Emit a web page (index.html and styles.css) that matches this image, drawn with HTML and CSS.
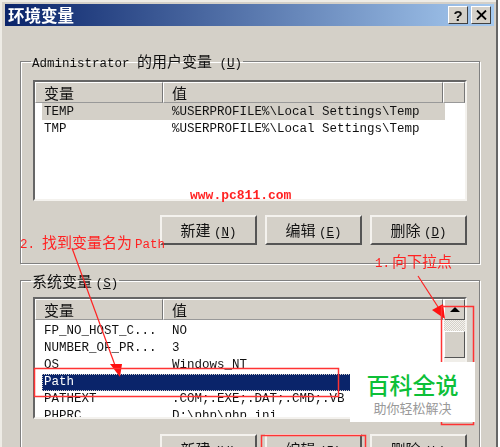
FILE: index.html
```html
<!DOCTYPE html>
<html lang="zh-CN">
  <head>
    <meta charset="UTF-8" />
    <title>环境变量</title>
    <link rel="stylesheet" href="styles.css">
  </head>
  <body>
    <div class="dialog">
      <div class="titlebar">
        <div class="title">环境变量</div>
        <div class="title-buttons">
          <div class="title-btn">?</div>
          <div class="title-btn">
            <svg width="11" height="10" viewBox="0 0 11 10"><path d="M1 0.5 L10 9.5 M10 0.5 L1 9.5" stroke="#000" stroke-width="1.8" fill="none" /></svg>
          </div>
        </div>
      </div>

      <fieldset class="group group-user">
        <legend class="mono">Administrator <span class="cjk">的用户变量</span> (<u>U</u>)</legend>
        <div class="list list-user">
          <div class="list-head">
            <div class="col-name">变量</div>
            <div class="col-value">值</div>
            <div class="col-rest"></div>
          </div>
          <div class="row row-grey"><span class="cell-name">TEMP</span><span class="cell-value">%USERPROFILE%\Local Settings\Temp</span></div>
          <div class="row"><span class="cell-name">TMP</span><span class="cell-value">%USERPROFILE%\Local Settings\Temp</span></div>
        </div>
        <div class="buttons">
          <div class="btn">新建 <span class="mono">(<u>N</u>)</span></div>
          <div class="btn">编辑 <span class="mono">(<u>E</u>)</span></div>
          <div class="btn">删除 <span class="mono">(<u>D</u>)</span></div>
        </div>
      </fieldset>

      <fieldset class="group group-system">
        <legend><span class="cjk">系统变量</span> <span class="mono">(<u>S</u>)</span></legend>
        <div class="list list-system">
          <div class="list-head">
            <div class="col-name">变量</div>
            <div class="col-value">值</div>
            <div class="col-rest"></div>
          </div>
          <div class="rows">
            <div class="row"><span class="cell-name">FP_NO_HOST_C...</span><span class="cell-value">NO</span></div>
            <div class="row"><span class="cell-name">NUMBER_OF_PR...</span><span class="cell-value">3</span></div>
            <div class="row"><span class="cell-name">OS</span><span class="cell-value">Windows_NT</span></div>
            <div class="row row-selected"><span class="cell-name">Path</span><span class="cell-value"></span></div>
            <div class="row"><span class="cell-name">PATHEXT</span><span class="cell-value">.COM;.EXE;.DAT;.CMD;.VB</span></div>
            <div class="row row-last"><span class="cell-name">PHPRC</span><span class="cell-value">D:\php\php.ini</span></div>
          </div>
          <div class="scrollbar">
            <div class="scroll-up"><div class="scroll-arrow"></div></div>
            <div class="scroll-track"></div>
            <div class="scroll-thumb"></div>
          </div>
        </div>
        <div class="buttons">
          <div class="btn">新建 <span class="mono">(<u>W</u>)</span></div>
          <div class="btn">编辑 <span class="mono">(<u>I</u>)</span></div>
          <div class="btn">删除 <span class="mono">(<u>L</u>)</span></div>
        </div>
      </fieldset>

      <svg class="notes" width="500" height="447" viewBox="0 0 500 447">
        <text class="note-site" x="190" y="199">www.pc811.com</text>
        <text class="note" x="20" y="248"><tspan class="note-small">2.</tspan><tspan x="42">找到变量名为</tspan><tspan class="note-small" x="135">Path</tspan></text>
        <text class="note" x="375" y="267"><tspan class="note-small">1.</tspan><tspan x="392">向下拉点</tspan></text>
        <path d="M72 248 L116 368" class="note-line" />
        <path d="M110 364 L122 364 L120 377 Z" class="note-fill" />
        <path d="M418 276 L440 310" class="note-line" />
        <path d="M432 310 L443 304 L445 319 Z" class="note-fill" />
        <rect x="34.5" y="368.5" width="304" height="28" class="note-box" />
        <rect x="441.5" y="306.5" width="32" height="118" class="note-box" />
        <rect x="261.5" y="435.5" width="104" height="20" class="note-box" />
      </svg>
    </div>

    <div class="watermark">
      <div class="wm-title">百科全说</div>
      <div class="wm-sub">助你轻松解决</div>
    </div>
  </body>
</html>
```

FILE: styles.css
```css
* {
  margin: 0;
  padding: 0;
  box-sizing: border-box;
}

body {
  width: 500px;
  height: 447px;
  overflow: hidden;
  background: #fff;
  position: relative;
  font-family: "Noto Sans CJK SC", sans-serif;
  color: #111;
}

.mono {
  font-family: "Liberation Mono", "Noto Sans CJK SC", monospace;
  font-size: 12.5px;
}

.cjk {
  font-family: "Noto Sans CJK SC", sans-serif;
  font-size: 15px;
}

.dialog {
  position: relative;
  width: 498px;
  height: 447px;
  padding: 4px 2px 0 5px;
  background: #d4d0c8;
  border-right: 2px solid #666;
  box-shadow: inset 2px 2px 0 #eeece6;
  overflow: hidden;
  filter: blur(0.4px);
}

.titlebar {
  height: 22px;
  display: flex;
  align-items: center;
  justify-content: space-between;
  padding: 0 3px;
  background: linear-gradient(to right, #0a246a, #a6caf0);
}

.title {
  color: #fff;
  font-size: 16.5px;
  font-weight: 700;
  line-height: 22px;
}

.title-buttons {
  display: flex;
  gap: 3px;
}

.title-btn {
  width: 20px;
  height: 18px;
  display: flex;
  align-items: center;
  justify-content: center;
  background: #d4d0c8;
  border: 1px solid;
  border-color: #fff #404040 #404040 #fff;
  font-family: "Liberation Sans", sans-serif;
  font-size: 15px;
  font-weight: 700;
}

.group {
  width: 460px;
  margin-left: 15px;
  padding: 0 12px 0 12px;
  border: 1px solid #808080;
  box-shadow: inset 1px 1px 0 #fff, 1px 1px 0 #fff;
}

.group legend {
  margin-left: -2px;
  padding: 0 1px;
  height: 18px;
  line-height: 18px;
  white-space: nowrap;
}

.group-user {
  margin-top: 26px;
  height: 212px;
}

.group-system {
  margin-top: 7px;
  height: 200px;
}

.list {
  position: relative;
  width: 434px;
  background: #fff;
  border: 2px solid;
  border-color: #666 #f4f2ee #f4f2ee #666;
  overflow: hidden;
}

.list-user {
  height: 121px;
  margin-top: 10px;
}

.list-system {
  height: 122px;
  margin-top: 8px;
}

.list-head {
  display: flex;
  height: 21px;
  font-size: 15px;
  line-height: 19px;
  background: #d4d0c8;
}

.col-name,
.col-value,
.col-rest {
  border: 1px solid;
  border-color: #fff #777 #999 #fff;
  padding-left: 8px;
}

.col-name {
  width: 128px;
}

.col-value {
  width: 280px;
}

.col-rest {
  flex: 1;
}

.rows {
  padding-top: 3px;
}

.row {
  display: flex;
  height: 17px;
  line-height: 17px;
  font-family: "Liberation Mono", monospace;
  font-size: 12.5px;
  margin-left: 7px;
  white-space: nowrap;
}

.list-user .row {
  line-height: 18px;
}

.row-last {
  height: 14px;
}

.cell-name {
  width: 128px;
  padding-left: 2px;
}

.cell-value {
  padding-left: 2px;
}

.row-grey {
  width: 403px;
  background: #d4d0c8;
}

.row-selected {
  background: #0a246a;
  color: #fff;
  outline: 1px dotted #d4d0c8;
  outline-offset: -1px;
}

.scrollbar {
  position: absolute;
  top: 0;
  right: 0;
  width: 21px;
  height: 118px;
  display: flex;
  flex-direction: column;
  background: #f0eee9;
}

.scroll-up {
  height: 21px;
  display: flex;
  align-items: center;
  justify-content: center;
  background: #d4d0c8;
  border: 1px solid;
  border-color: #fff #555 #555 #fff;
}

.scroll-arrow {
  width: 0;
  height: 0;
  border-left: 5px solid transparent;
  border-right: 5px solid transparent;
  border-bottom: 5px solid #000;
}

.scroll-track {
  height: 11px;
  background: repeating-conic-gradient(#d4d0c8 0 25%, #f4f2ee 0 50%) 0 0 / 2px 2px;
}

.scroll-thumb {
  height: 27px;
  background: #d4d0c8;
  border: 1px solid;
  border-color: #fff #555 #555 #fff;
}

.buttons {
  display: flex;
  gap: 8px;
  justify-content: flex-end;
  margin-top: 14px;
}

.group-system .buttons {
  margin-top: 15px;
}

.btn {
  width: 97px;
  height: 30px;
  line-height: 26px;
  text-align: center;
  font-size: 15px;
  background: #d4d0c8;
  border: 2px solid;
  border-color: #f4f2ee #555 #555 #f4f2ee;
}

.notes {
  position: absolute;
  top: 0;
  left: 0;
}

.note {
  font-family: "Liberation Mono", "Noto Sans CJK SC", monospace;
  font-size: 15px;
  fill: #f22;
}

.note-small {
  font-size: 12.5px;
}

.note-site {
  font-family: "Liberation Mono", monospace;
  font-size: 13px;
  font-weight: 700;
  fill: #f22;
}

.note-line {
  stroke: #f22;
  stroke-width: 1.2;
  fill: none;
}

.note-fill {
  fill: #f11;
}

.note-box {
  stroke: #f33;
  stroke-width: 1.5;
  fill: none;
}

/* site stamp sits on top of the screenshot */
.watermark {
  position: absolute;
  left: 350px;
  top: 362px;
  width: 125px;
  height: 60px;
  background: #fff;
  text-align: center;
}

.wm-title {
  margin-top: 7px;
  color: #0dc038;
  font-family: "Noto Sans CJK SC", sans-serif;
  font-size: 23px;
  line-height: 30px;
  font-weight: 500;
}

.wm-sub {
  color: #999;
  font-size: 13px;
  line-height: 17px;
}
```
